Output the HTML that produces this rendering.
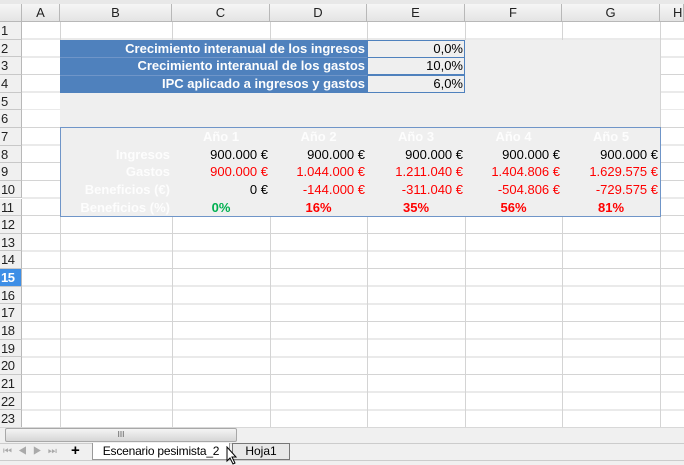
<!DOCTYPE html>
<html><head><meta charset="utf-8"><style>
*{margin:0;padding:0;box-sizing:border-box}
body{width:684px;height:465px;overflow:hidden;background:#fff;font-family:"Liberation Sans",sans-serif;position:relative}
.a{position:absolute}
.grid{position:absolute;left:22px;top:22px;width:662px;height:406px;background:repeating-linear-gradient(to bottom,transparent 0,transparent 16.65px,#d4d4d4 16.65px,#d4d4d4 17.65px)}
.vl{position:absolute;top:22px;height:406px;width:1px;background:#d4d4d4}
.ch{position:absolute;top:4px;height:18px;background:linear-gradient(#f6f6f6,#e4e4e4);border-right:1px solid #b8b8b8;border-bottom:1px solid #b8b8b8;font-size:13px;text-align:center;line-height:18px;color:#222}
.rh{position:absolute;left:0;width:22px;height:17.65px;background:#f0f0f0;border-right:1px solid #b8b8b8;border-bottom:1px solid #c8c8c8;font-size:13px;line-height:17px;padding-left:1px;color:#222;letter-spacing:-0.5px}
.t{position:absolute;font-size:13px;line-height:17.65px;white-space:nowrap}
.r{text-align:right}
.c{text-align:center}
.b{font-weight:bold}
.w{color:#fdfdfd}
.red{color:#ff0000}
</style></head><body>
<div class="a" style="left:0;top:0;width:684px;height:4px;background:#e8e8e8"></div>
<div class="grid"></div>
<div class="vl" style="left:60px"></div><div class="vl" style="left:172px"></div><div class="vl" style="left:270px"></div><div class="vl" style="left:367px"></div><div class="vl" style="left:465px"></div><div class="vl" style="left:562px"></div><div class="vl" style="left:660px"></div>
<div class="ch" style="left:0;width:22px"></div>
<div class="ch" style="left:22px;width:38px">A</div>
<div class="ch" style="left:60px;width:112px">B</div>
<div class="ch" style="left:172px;width:98px">C</div>
<div class="ch" style="left:270px;width:97px">D</div>
<div class="ch" style="left:367px;width:98px">E</div>
<div class="ch" style="left:465px;width:97px">F</div>
<div class="ch" style="left:562px;width:98px">G</div>
<div class="ch" style="left:660px;width:24px;text-align:left;padding-left:13px">H</div>
<div class="rh" style="top:22px">1</div><div class="rh" style="top:39.65px">2</div><div class="rh" style="top:57.3px">3</div><div class="rh" style="top:74.95px">4</div><div class="rh" style="top:92.6px">5</div><div class="rh" style="top:110.25px">6</div><div class="rh" style="top:127.9px">7</div><div class="rh" style="top:145.55px">8</div><div class="rh" style="top:163.2px">9</div><div class="rh" style="top:180.85px">10</div><div class="rh" style="top:198.5px">11</div><div class="rh" style="top:216.15px">12</div><div class="rh" style="top:233.8px">13</div><div class="rh" style="top:251.45px">14</div><div class="rh" style="top:269.1px;background:#3d8ee6;color:#fff;font-weight:bold">15</div><div class="rh" style="top:286.75px">16</div><div class="rh" style="top:304.4px">17</div><div class="rh" style="top:322.05px">18</div><div class="rh" style="top:339.7px">19</div><div class="rh" style="top:357.35px">20</div><div class="rh" style="top:375px">21</div><div class="rh" style="top:392.65px">22</div><div class="rh" style="top:410.3px">23</div>
<div class="a" style="left:60px;top:39.65px;width:600px;height:176.5px;background:#efefef"></div>
<div class="a" style="left:60px;top:39.65px;width:307px;height:53px;background:#4f81bd"></div>
<div class="a" style="left:60px;top:57px;width:307px;height:1px;background:#6f95c8"></div>
<div class="a" style="left:60px;top:74.6px;width:307px;height:1px;background:#6f95c8"></div>
<div class="a" style="left:367px;top:39.65px;width:98px;height:18px;border:1px solid #4f81bd"></div>
<div class="a" style="left:367px;top:57.3px;width:98px;height:18px;border:1px solid #4f81bd"></div>
<div class="a" style="left:367px;top:74.95px;width:98px;height:18px;border:1px solid #4f81bd"></div>
<div class="a" style="left:60px;top:126.9px;width:601px;height:90px;border:1px solid #6f95c8"></div>
<div class="t r b w" style="left:60px;width:305px;top:39.65px">Crecimiento interanual de los ingresos</div>
<div class="t r b w" style="left:60px;width:305px;top:57.3px">Crecimiento interanual de los gastos</div>
<div class="t r b w" style="left:60px;width:305px;top:74.95px">IPC aplicado a ingresos y gastos</div>
<div class="t r" style="left:367px;width:96px;top:39.65px">0,0%</div>
<div class="t r" style="left:367px;width:96px;top:57.3px">10,0%</div>
<div class="t r" style="left:367px;width:96px;top:74.95px">6,0%</div>
<div class="t c b w" style="left:172px;width:98px;top:127.9px">Año 1</div>
<div class="t c b w" style="left:270px;width:97px;top:127.9px">Año 2</div>
<div class="t c b w" style="left:367px;width:98px;top:127.9px">Año 3</div>
<div class="t c b w" style="left:465px;width:97px;top:127.9px">Año 4</div>
<div class="t c b w" style="left:562px;width:98px;top:127.9px">Año 5</div>
<div class="t r b w" style="left:60px;width:110px;top:145.55px">Ingresos</div>
<div class="t r b w" style="left:60px;width:110px;top:163.2px">Gastos</div>
<div class="t r b w" style="left:60px;width:110px;top:180.85px">Beneficios (€)</div>
<div class="t r b w" style="left:60px;width:110px;top:198.5px">Beneficios (%)</div>
<div class="t r" style="left:172px;width:96px;top:145.55px">900.000 €</div>
<div class="t r" style="left:270px;width:95px;top:145.55px">900.000 €</div>
<div class="t r" style="left:367px;width:96px;top:145.55px">900.000 €</div>
<div class="t r" style="left:465px;width:95px;top:145.55px">900.000 €</div>
<div class="t r" style="left:562px;width:96px;top:145.55px">900.000 €</div>
<div class="t r red" style="left:172px;width:96px;top:163.2px">900.000 €</div>
<div class="t r red" style="left:270px;width:95px;top:163.2px">1.044.000 €</div>
<div class="t r red" style="left:367px;width:96px;top:163.2px">1.211.040 €</div>
<div class="t r red" style="left:465px;width:95px;top:163.2px">1.404.806 €</div>
<div class="t r red" style="left:562px;width:96px;top:163.2px">1.629.575 €</div>
<div class="t r" style="left:172px;width:96px;top:180.85px">0 €</div>
<div class="t r red" style="left:270px;width:95px;top:180.85px">-144.000 €</div>
<div class="t r red" style="left:367px;width:96px;top:180.85px">-311.040 €</div>
<div class="t r red" style="left:465px;width:95px;top:180.85px">-504.806 €</div>
<div class="t r red" style="left:562px;width:96px;top:180.85px">-729.575 €</div>
<div class="t c b" style="left:172px;width:98px;top:198.5px;color:#00b050">0%</div>
<div class="t c b red" style="left:270px;width:97px;top:198.5px">16%</div>
<div class="t c b red" style="left:367px;width:98px;top:198.5px">35%</div>
<div class="t c b red" style="left:465px;width:97px;top:198.5px">56%</div>
<div class="t c b red" style="left:562px;width:98px;top:198.5px">81%</div>
<div class="a" style="left:0;top:427px;width:684px;height:38px;background:#f0f0f0;border-top:1px solid #d8d8d8"></div>
<div class="a" style="left:5px;top:428px;width:232px;height:14px;border:1px solid #a8a8a8;border-radius:2px;background:linear-gradient(#f4f4f4,#d6d6d6);font-size:8px;text-align:center;line-height:12px;color:#555">III</div>
<div class="a" style="left:0;top:443px;width:684px;height:1px;background:#ccc"></div>
<div class="t" style="left:3px;top:443px;font-size:10px;color:#aaa;letter-spacing:6px">⏮◀▶⏭</div>
<div class="t b" style="left:71px;top:442px;font-size:15px">+</div>
<div class="a" style="left:92px;top:443px;width:138px;height:17px;background:#fff;border:1px solid #999;border-top:none;font-size:12px;letter-spacing:-0.2px;text-align:center;line-height:16px;white-space:nowrap">Escenario pesimista_2</div>
<div class="a" style="left:232px;top:443px;width:58px;height:17px;background:#e8e8e8;border:1px solid #777;font-size:12px;text-align:center;line-height:15px">Hoja1</div>
<div class="a" style="left:0;top:460px;width:684px;height:5px;background:#f0f0f0;border-top:1px solid #ccc"></div>
<svg class="a" style="left:226px;top:446px" width="12" height="19"><path d="M1 1 L1 15 L4 12 L7 18 L9 17 L6 11 L10 11 Z" fill="#fff" stroke="#000" stroke-width="1"/></svg>
</body></html>
